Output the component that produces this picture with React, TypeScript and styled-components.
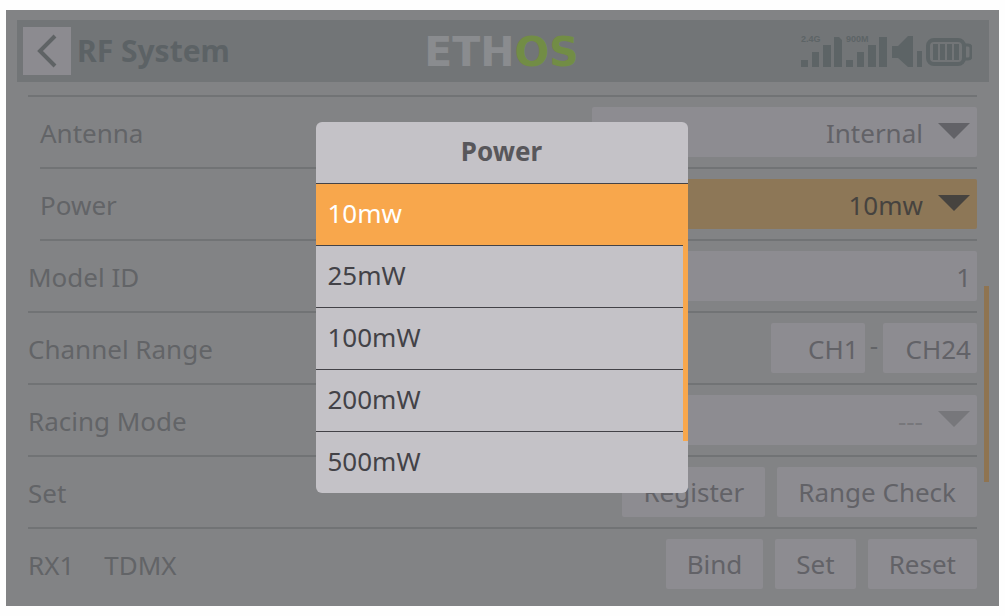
import { useState } from "react";
import type { ReactNode } from "react";
import styled, { createGlobalStyle } from "styled-components";

const GlobalStyle = createGlobalStyle`
  *, *::before, *::after { box-sizing: border-box; }
  body {
    margin: 0;
    background: #fefefe;
    font-family: "Noto Sans", "Open Sans", sans-serif;
    font-size: 26px;
    line-height: 36px;
  }
  button, input, select { font: inherit; }
`;

const Page = styled.div`
  padding: 10px 6px;
`;

const Screen = styled.main`
  position: relative;
  padding: 10px 10px 7px 11px;
  background: #828385;
  color: #626467;
`;

const Header = styled.header`
  display: grid;
  grid-template-columns: 1fr auto 1fr;
  align-items: center;
  height: 62px;
  padding: 0 17px 0 6px;
  background: #727577;
`;

const Heading = styled.div`
  display: flex;
  align-items: center;
  gap: 6px;
`;

const BackButton = styled.button`
  display: flex;
  align-items: center;
  justify-content: center;
  width: 48px;
  height: 48px;
  padding: 0;
  border: 0;
  background: #8c8b90;
`;

const Title = styled.h1`
  margin: 0;
  font-size: 30px;
  font-weight: 700;
  color: #5c6265;
`;

const Wordmark = styled.div`
  padding: 2px 0 0 8px;
  font-family: "DejaVu Sans", sans-serif;
  font-size: 41px;
  font-weight: 700;
  line-height: 60px;
  color: #8a8c8f;
`;

const WordmarkAccent = styled.span`
  color: #728d45;
`;

const Status = styled.div`
  display: flex;
  justify-content: flex-end;
  color: #5d6466;
`;

const Rows = styled.div`
  margin: 13px 12px 0 11px;
`;

const Row = styled.div<{ $nested?: boolean; $ruleInset?: boolean }>`
  display: flex;
  align-items: center;
  justify-content: space-between;
  height: 72px;
  margin-left: ${(p) => (p.$ruleInset ? 12 : 0)}px;
  padding-left: ${(p) => (p.$nested && !p.$ruleInset ? 12 : 0)}px;
  border-top: 2px solid #717375;
`;

const Label = styled.label`
  padding-top: 2px;
  white-space: pre;
`;

const RowName = styled.div`
  display: flex;
  gap: 30px;
  padding-top: 2px;
`;

const Controls = styled.div<{ $gap?: number }>`
  display: flex;
  align-items: center;
  gap: ${(p) => p.$gap ?? 12}px;
`;

const Dash = styled.span`
  padding-bottom: 6px;
`;

const SelectBox = styled.div<{ $active?: boolean; $muted?: boolean }>`
  display: grid;
  align-items: center;
  width: 385px;
  height: 50px;
  border-radius: 2px;
  background: ${(p) => (p.$active ? "#8d7757" : "#8d8c91")};
  color: ${(p) => (p.$active ? "#46433f" : p.$muted ? "#77777b" : "#626267")};

  > * { grid-area: 1 / 1; }
  > svg { justify-self: end; margin: 0 7px 2px 0; pointer-events: none; }
`;

const Select = styled.select`
  width: 100%;
  height: 50px;
  padding: 2px 54px 0 12px;
  border: 0;
  appearance: none;
  background: transparent;
  color: inherit;
  text-align-last: right;
  outline: none;
`;

const Field = styled.input<{ $wide?: boolean }>`
  width: ${(p) => (p.$wide ? 385 : 94)}px;
  height: 50px;
  padding: 2px 6px 0;
  border: 0;
  border-radius: 2px;
  background: #8d8c91;
  color: #626267;
  text-align: right;
  outline: none;
`;

const Action = styled.button`
  height: 50px;
  padding: 0 21px;
  border: 0;
  border-radius: 2px;
  background: #8d8c91;
  color: #626267;
`;

const PageScroll = styled.div`
  position: absolute;
  top: 276px;
  right: 10px;
  width: 5px;
  height: 196px;
  background: #8f7451;
`;

const Overlay = styled.div`
  position: absolute;
  inset: 0;
  display: flex;
  align-items: center;
  justify-content: center;
  padding: 0 2px 2px 0;
`;

const Popup = styled.section`
  position: relative;
  width: 372px;
  overflow: hidden;
  border-radius: 6px;
  background: #c4c2c7;
`;

const PopupTitle = styled.h2`
  margin: 0;
  height: 61px;
  font-size: 26px;
  line-height: 58px;
  font-weight: 700;
  text-align: center;
  color: #58575b;
`;

const Option = styled.button<{ $selected: boolean }>`
  display: block;
  width: 100%;
  height: 62px;
  padding: 0 12px 2px;
  border: 0;
  border-top: 1px solid #434247;
  background: ${(p) => (p.$selected ? "#f8a74c" : "transparent")};
  color: ${(p) => (p.$selected ? "#ffffff" : "#434247")};
  text-align: left;
  outline: none;
`;

const PopupScroll = styled.div`
  position: absolute;
  top: 62px;
  right: 0;
  width: 5px;
  height: 257px;
  background: #f8a74c;
`;

const Caret = () => (
  <svg width="32" height="16" viewBox="0 0 32 16" aria-hidden="true">
    <path d="M0 0H32L16 16Z" fill="currentColor" />
  </svg>
);

const StatusIcons = () => (
  <svg width="171" height="34" viewBox="0 0 171 34" fill="currentColor" role="img" aria-label="Signal, volume and battery">
    <g fontFamily="Liberation Sans, sans-serif" fontWeight="700" fontSize="9">
      <text x="0" y="8">2.4G</text>
      <text x="45" y="8">900M</text>
    </g>
    <path d="M0 26h7v7H0zM11 18h7v15h-7zM22 11h8v22h-8zM33 3h5l3 3v27h-8z" />
    <path d="M45 26h7v7h-7zM56 18h7v15h-7zM67 11h8v22h-8zM78 3h8v30h-8z" />
    <path d="M91 12h6L107 2h5v31h-5L97 24h-6zM116 17h5v16h-5z" />
    <rect x="127" y="6" width="36" height="24" rx="6" fill="none" stroke="currentColor" strokeWidth="4" />
    <path d="M164 11h3q3 0 3 3v8q0 3-3 3h-3" fill="none" stroke="currentColor" strokeWidth="3" />
    <path d="M132 10h5v16h-5zM139 10h5v16h-5zM146 10h5v16h-5zM153 10h5v16h-5z" />
  </svg>
);

type SettingProps = { id: string; label: string; nested?: boolean; ruleInset?: boolean; children: ReactNode };

const Setting = ({ id, label, nested, ruleInset, children }: SettingProps) => (
  <Row $nested={nested} $ruleInset={ruleInset}>
    <Label htmlFor={id}>{label}</Label>
    {children}
  </Row>
);

const powers = ["10mw", "25mW", "100mW", "200mW", "500mW"];

export default function App() {
  const [power, setPower] = useState("10mw");
  return (
    <Page>
      <GlobalStyle />
      <Screen>
        <Header>
          <Heading>
            <BackButton aria-label="Back">
              <svg width="20" height="34" viewBox="0 0 20 34" fill="none" stroke="#5f6365" strokeWidth="4" aria-hidden="true">
                <path d="M18 2L3 17L18 32" />
              </svg>
            </BackButton>
            <Title>RF System</Title>
          </Heading>
          <Wordmark>
            ETH<WordmarkAccent>OS</WordmarkAccent>
          </Wordmark>
          <Status>
            <StatusIcons />
          </Status>
        </Header>
        <Rows>
          <Setting id="antenna" label="Antenna" nested>
            <SelectBox>
              <Select id="antenna"><option>Internal</option></Select>
              <Caret />
            </SelectBox>
          </Setting>
          <Setting id="power" label="Power" nested ruleInset>
            <SelectBox $active>
              <Select id="power" value={power} onChange={(e) => setPower(e.target.value)}>
                {powers.map((p) => <option key={p}>{p}</option>)}
              </Select>
              <Caret />
            </SelectBox>
          </Setting>
          <Row $nested={false} $ruleInset>
            <ModelLabel htmlFor="model">Model ID</ModelLabel>
            <Field id="model" $wide defaultValue="1" />
          </Row>
          <Setting id="first" label="Channel Range">
            <Controls $gap={5}>
              <Field id="first" defaultValue="CH1" />
              <Dash>-</Dash>
              <Field aria-label="Last channel" defaultValue="CH24" />
            </Controls>
          </Setting>
          <Setting id="racing" label="Racing Mode">
            <SelectBox $muted>
              <Select id="racing"><option>---</option></Select>
              <Caret />
            </SelectBox>
          </Setting>
          <Row>
            <RowName>Set</RowName>
            <Controls>
              <Action>Register</Action>
              <Action>Range Check</Action>
            </Controls>
          </Row>
          <Row>
            <RowName>
              <span>RX1</span>
              <span>TDMX</span>
            </RowName>
            <Controls>
              <Action>Bind</Action>
              <Action>Set</Action>
              <Action>Reset</Action>
            </Controls>
          </Row>
        </Rows>
        <PageScroll />
        <Overlay>
          <Popup role="dialog" aria-labelledby="popup-title">
            <PopupTitle id="popup-title">Power</PopupTitle>
            {powers.map((p) => (
              <Option key={p} $selected={p === power} onClick={() => setPower(p)}>{p}</Option>
            ))}
            <PopupScroll />
          </Popup>
        </Overlay>
      </Screen>
    </Page>
  );
}

/* The rule above this row is indented with the nested group; its label is not. */
const ModelLabel = styled(Label)`
  margin-left: -12px;
`;
